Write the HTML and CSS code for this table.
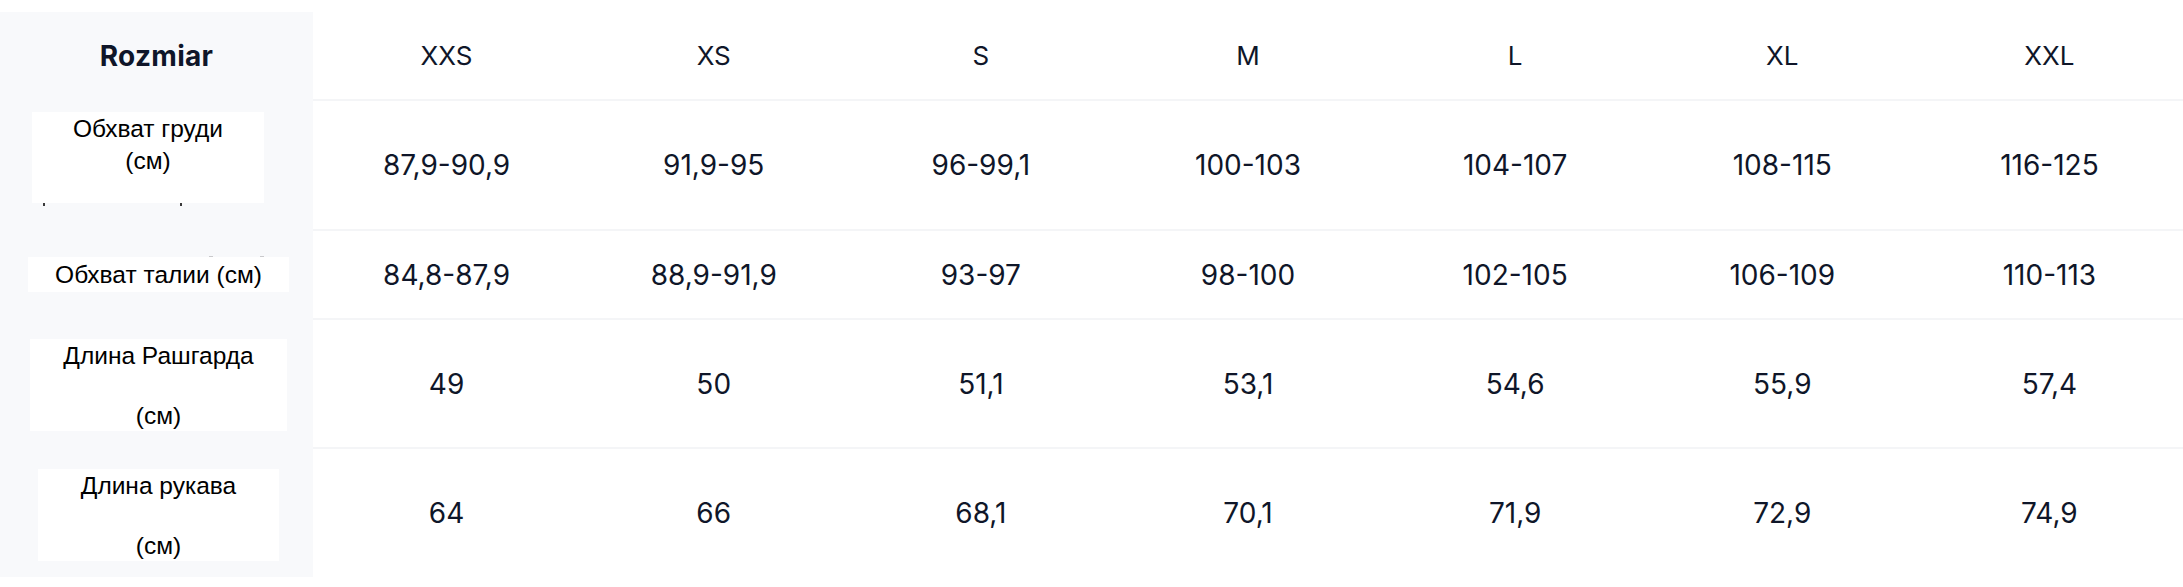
FILE: index.html
```html
<!DOCTYPE html>
<html lang="ru">
<head>
<meta charset="utf-8">
<title>Rozmiar</title>
<link rel="stylesheet" href="styles.css">
</head>
<body>
<div class="page">
  <table class="size-table">
    <colgroup>
      <col class="col-label">
      <col span="7">
    </colgroup>
    <thead>
      <tr class="row-head">
        <th class="label-cell head-label">Rozmiar</th>
        <th>XXS</th>
        <th>XS</th>
        <th>S</th>
        <th>M</th>
        <th>L</th>
        <th>XL</th>
        <th>XXL</th>
      </tr>
    </thead>
    <tbody>
      <tr class="row-chest">
        <td class="label-cell"><div class="tag tag-chest">Обхват груди<br>(см)</div></td>
        <td>87,9-90,9</td>
        <td>91,9-95</td>
        <td>96-99,1</td>
        <td>100-103</td>
        <td>104-107</td>
        <td>108-115</td>
        <td>116-125</td>
      </tr>
      <tr class="row-waist">
        <td class="label-cell"><div class="tag tag-waist">Обхват талии (см)</div></td>
        <td>84,8-87,9</td>
        <td>88,9-91,9</td>
        <td>93-97</td>
        <td>98-100</td>
        <td>102-105</td>
        <td>106-109</td>
        <td>110-113</td>
      </tr>
      <tr class="row-length">
        <td class="label-cell"><div class="tag tag-length">Длина Рашгарда<br><br>(см)</div></td>
        <td>49</td>
        <td>50</td>
        <td>51,1</td>
        <td>53,1</td>
        <td>54,6</td>
        <td>55,9</td>
        <td>57,4</td>
      </tr>
      <tr class="row-sleeve">
        <td class="label-cell"><div class="tag tag-sleeve">Длина рукава<br><br>(см)</div></td>
        <td>64</td>
        <td>66</td>
        <td>68,1</td>
        <td>70,1</td>
        <td>71,9</td>
        <td>72,9</td>
        <td>74,9</td>
      </tr>
    </tbody>
  </table>
</div>
</body>
</html>
```

FILE: styles.css
```css
html, body {
  margin: 0;
  padding: 0;
  background: #ffffff;
}

.page {
  padding-top: 12px;
}

.size-table {
  width: 100%;
  border-collapse: separate;
  border-spacing: 0;
  table-layout: fixed;
  font-family: "Inter", "Liberation Sans", sans-serif;
  color: #0f1629;
}

.col-label {
  width: 313px;
}

.size-table th,
.size-table td {
  box-sizing: border-box;
  padding: 0;
  text-align: center;
  vertical-align: middle;
  font-size: 28px;
  font-weight: 400;
  border-bottom: 2px solid #f4f5f7;
}

.size-table thead th {
  font-size: 26px;
}

.size-table .label-cell {
  background: #f8f9fb;
  border-bottom: 2px solid #f8f9fb;
  font-size: 0;
  line-height: 0;
}

.size-table .head-label {
  font-size: 28px;
  line-height: normal;
  font-weight: 700;
  letter-spacing: 0.3px;
}

.row-head th { height: 89px; }
.row-chest td { height: 130px; }
.row-waist td { height: 89px; }
.row-length td { height: 129px; }
.row-sleeve td { height: 128px; border-bottom: none; }

.tag {
  position: relative;
  display: inline-block;
  vertical-align: middle;
  box-sizing: border-box;
  background: #ffffff;
  color: #000000;
  font-family: "Liberation Sans", Arial, sans-serif;
  font-size: 24.5px;
  text-align: center;
}

.tag-chest {
  width: 232px;
  height: 91px;
  line-height: 32px;
  padding-top: 1px;
  margin: 0 17px 15px 0;
}

/* glimpses of hidden text peeking out around the label boxes */
.tag-chest::before,
.tag-chest::after {
  content: "";
  position: absolute;
  top: 91px;
  width: 2px;
  height: 3px;
  background: #3a3a3a;
}

.tag-chest::before { left: 11px; }
.tag-chest::after { left: 148px; }

.tag-waist {
  width: 261px;
  height: 35px;
  line-height: 35px;
  margin-left: 4px;
}

.tag-waist::before,
.tag-waist::after {
  content: "";
  position: absolute;
  top: -1px;
  width: 4px;
  height: 1px;
  background: #c9c9cc;
}

.tag-waist::before { left: 181px; }
.tag-waist::after { left: 232px; }

.tag-length {
  width: 257px;
  height: 92px;
  line-height: 30px;
  padding-top: 2px;
  margin: 3px 0 0 4px;
}

.tag-sleeve {
  width: 241px;
  height: 92px;
  line-height: 30px;
  padding-top: 2px;
  margin: 6px 0 0 4px;
}
```
